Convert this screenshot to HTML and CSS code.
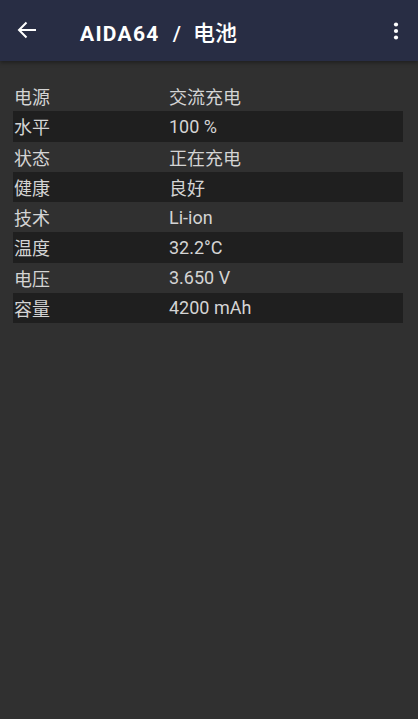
FILE: index.html
```html
<!DOCTYPE html>
<html lang="zh-CN">
<head>
  <meta charset="UTF-8" />
  <meta name="viewport" content="width=device-width, initial-scale=1" />
  <title>AIDA64 / 电池</title>
  <link rel="stylesheet" href="styles.css">
</head>
<body>
  <header class="toolbar">
    <svg class="back" width="22" height="22" viewBox="0 0 22 22">
      <path d="M20 11H3M10.5 3.5L3 11l7.5 7.5" fill="none" stroke="#fff" stroke-width="2"/>
    </svg>
    <h1 class="title"><span class="app">AIDA64</span><span class="sep">/</span><span class="page">电池</span></h1>
    <svg class="menu" width="24" height="24" viewBox="0 0 24 24">
      <circle cx="12" cy="5.5" r="2.1" fill="#fff"/>
      <circle cx="12" cy="12" r="2.1" fill="#fff"/>
      <circle cx="12" cy="18.5" r="2.1" fill="#fff"/>
    </svg>
  </header>

  <main class="content">
    <div class="row"><span class="key">电源</span><span class="val">交流充电</span></div>
    <div class="row"><span class="key">水平</span><span class="val">100 %</span></div>
    <div class="row"><span class="key">状态</span><span class="val">正在充电</span></div>
    <div class="row"><span class="key">健康</span><span class="val">良好</span></div>
    <div class="row"><span class="key">技术</span><span class="val">Li-ion</span></div>
    <div class="row"><span class="key">温度</span><span class="val">32.2°C</span></div>
    <div class="row"><span class="key">电压</span><span class="val">3.650 V</span></div>
    <div class="row"><span class="key">容量</span><span class="val">4200 mAh</span></div>
  </main>
</body>
</html>
```

FILE: styles.css
```css
html,
body {
  margin: 0;
  height: 100%;
}

body {
  font-family: Roboto, "Noto Sans CJK SC", sans-serif;
  background: #303030;
  color: #d4d4d4;
}

.toolbar {
  height: 61px;
  background: #282d44;
  display: flex;
  align-items: center;
  padding: 0 10px 0 16px;
  box-shadow: 0 2px 4px rgba(0,0,0,0.35);
}

.back {
  flex: none;
  margin-top: -2px;
}

.title {
  flex: 1;
  display: flex;
  align-items: baseline;
  margin: 0 0 0 42px;
  font-size: 21px;
  font-weight: 700;
  color: #fff;
}

.app {
  letter-spacing: 1.3px;
}

.sep {
  margin: 0 12px 0 13px;
  font-weight: 500;
}

.page {
  font-size: 22px;
  font-weight: 500;
}

.menu {
  flex: none;
}

.content {
  padding: 20px 15px 0 13px;
}

.row {
  display: flex;
  align-items: center;
  height: 30.25px;
  font-size: 18px;
  padding-left: 1px;
}

.row:nth-child(even) {
  background: #1f1f1f;
}

.key {
  width: 155px;
}

.val {
  flex: 1;
}
```
